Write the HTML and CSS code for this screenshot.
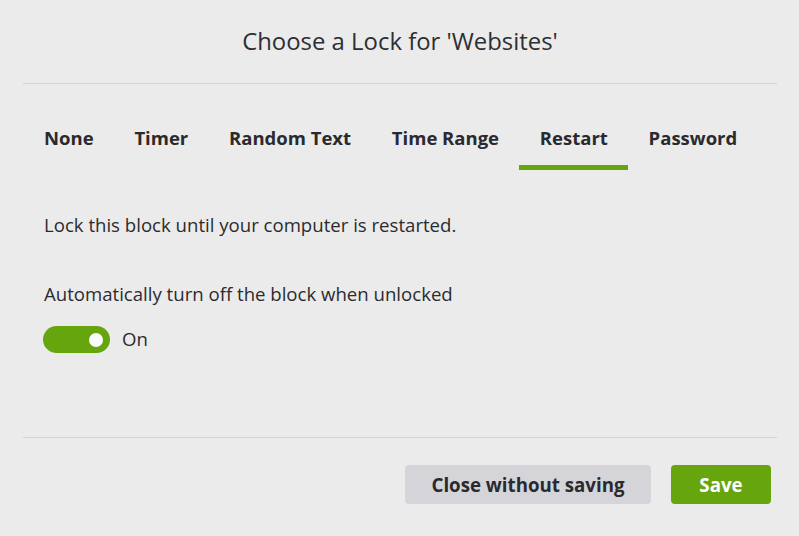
FILE: index.html
```html
<!DOCTYPE html>
<html>
<head>
<meta charset="utf-8">
<link rel="stylesheet" href="styles.css">
</head>
<body>
<div class="dialog">
  <div class="header">
    <h1 class="title">Choose a Lock for 'Websites'</h1>
  </div>
  <nav class="tabs">
    <div class="tab">None</div>
    <div class="tab">Timer</div>
    <div class="tab">Random Text</div>
    <div class="tab">Time Range</div>
    <div class="tab active">Restart</div>
    <div class="tab">Password</div>
  </nav>
  <div class="content">
    <p class="desc">Lock this block until your computer is restarted.</p>
    <p class="label">Automatically turn off the block when unlocked</p>
    <div class="toggle-row">
      <div class="toggle"><span class="knob"></span></div>
      <span class="toggle-text">On</span>
    </div>
  </div>
  <div class="footer">
    <button class="btn btn-secondary">Close without saving</button>
    <button class="btn btn-primary">Save</button>
  </div>
</div>
</body>
</html>
```
FILE: styles.css
```css
html, body {
  margin: 0;
  padding: 0;
  background: #ebebeb;
}
body {
  font-family: "Open Sans", "Noto Sans", sans-serif;
  color: #2b2b2f;
  width: 799px;
  height: 536px;
  overflow: hidden;
}
.dialog {
  padding: 0 22px 0 23px;
}
.header {
  height: 83px;
  border-bottom: 1px solid #d4d4d4;
  display: flex;
  align-items: center;
  justify-content: center;
}
.title {
  margin: 0;
  font-size: 23.9px;
  font-weight: 400;
  color: #2e2e33;
  padding-bottom: 2px;
}
.tabs {
  display: flex;
  margin-top: 24px;
}
.tab {
  padding: 18px 20.4px 0;
  font-size: 18.5px;
  font-weight: 700;
  color: #2a2a2e;
  height: 62px;
  line-height: 24px;
  box-sizing: border-box;
  white-space: nowrap;
}
.tab:first-child {
  padding-left: 21px;
}
.tab.active {
  border-bottom: 5px solid #66a50e;
}
.content {
  padding: 0 21px;
  height: 267px;
  border-bottom: 1px solid #d4d4d4;
}
.desc {
  margin: 0;
  padding-top: 43px;
  font-size: 18.6px;
  line-height: 24px;
}
.label {
  margin: 45px 0 0 0;
  font-size: 18.6px;
  line-height: 24px;
}
.toggle-row {
  display: flex;
  align-items: center;
  margin-top: 20px;
  margin-left: -1px;
}
.toggle {
  width: 67px;
  height: 27px;
  border-radius: 14px;
  background: #66a50e;
  position: relative;
}
.knob {
  position: absolute;
  width: 14px;
  height: 14px;
  border-radius: 50%;
  background: #fafafa;
  top: 6.5px;
  right: 7px;
}
.toggle-text {
  margin-left: 12px;
  font-size: 18.6px;
  line-height: 24px;
  padding-bottom: 2px;
}
.footer {
  display: flex;
  justify-content: flex-end;
  gap: 20px;
  padding-top: 27px;
  padding-right: 6px;
}
.btn {
  font-family: "Open Sans", "Noto Sans", sans-serif;
  font-size: 18.7px;
  font-weight: 700;
  height: 39px;
  border: none;
  border-radius: 4px;
  padding: 0 0 1px;
  cursor: pointer;
}
.btn-secondary {
  width: 246px;
  background: #d5d5d9;
  color: #2a2a2e;
}
.btn-primary {
  width: 100px;
  background: #66a50e;
  color: #ffffff;
}
```
